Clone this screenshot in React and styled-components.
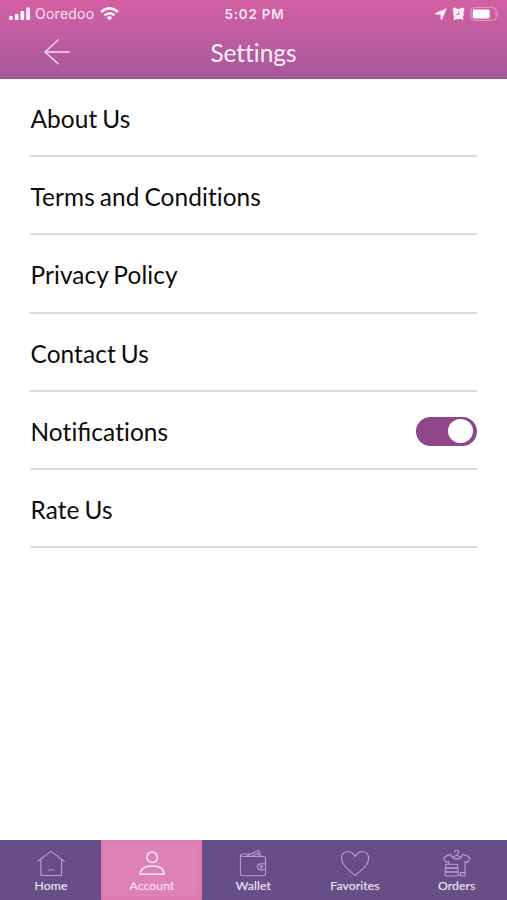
import React, { useState } from 'react'
import styled, { createGlobalStyle } from 'styled-components';

const GlobalStyle = createGlobalStyle`
    * {
        box-sizing: border-box;
    }
    body {
        margin: 0;
        background: white;
        font-family: Lato, sans-serif;
        font-variant-ligatures: none;
    }
    svg {
        display: block;
    }
`;

const Screen = styled.div`
    display: flex;
    flex-direction: column;
    height: 900px;
    width: 507px;
    overflow: hidden;
`;

/**
 * Top part: status bar and page title
 */

const Header = styled.header`
    height: 79px;
    color: white;
    background: linear-gradient(180deg, #d45fa4 0%, #c05da0 45%, #a6599c 100%);
    border-bottom: 1px solid #98568f;
`;

const StatusBar = styled.div`
    display: grid;
    grid-template-columns: 1fr auto 1fr;
    align-items: center;
    height: 27px;
    padding: 0 7px 0 9px;
    font-family: Inter, sans-serif;
    font-size: 14px;
    color: #fff0f8;
`;

const StatusGroup = styled.div`
    display: flex;
    align-items: center;
    justify-content: flex-start;
`;

const StatusIcons = styled(StatusGroup)`
    justify-content: flex-end;
    gap: 5px;
`;

const Carrier = styled.span`
    margin: 0 6px 0 4px;
    font-size: 14px;
    letter-spacing: 0.25px;
    color: #fbe0f0;
`;

const Clock = styled.span`
    font-size: 13.4px;
    font-weight: 600;
    letter-spacing: 0.8px;
    color: #fbe6f3;
`;

const TitleBar = styled.div`
    display: grid;
    grid-template-columns: 1fr auto 1fr;
    align-items: center;
    height: 50px;
    padding: 0 43px;
`;

const BackButton = styled.button`
    width: 28px;
    padding: 0;
    border: 0;
    background: none;
    color: #fbd9ef;
`;

const Title = styled.h1`
    margin: 0;
    padding-top: 2px;
    font-size: 24.4px;
    line-height: 30px;
    font-weight: 400;
    color: #fdeef8;
`;

/**
 * List of settings
 */

const List = styled.main`
    flex: 1;
    padding: 0 30px;
`;

const Row = styled.div`
    display: flex;
    align-items: center;
    justify-content: space-between;
    height: 78.2px;
    padding-top: 3px;
    border-bottom: 2px solid #d9d9d9;
    font-size: 24.4px;
    letter-spacing: 0.1px;
    word-spacing: -1.4px;
    color: #0c0c0c;
`;

const RowLabel = styled.span`
    padding-left: 0.5px;
`;

// joins only the letters inside, the rest of the page is set without ligatures
const Joined = styled.span`
    font-variant-ligatures: normal;
    letter-spacing: 0;
`;

const Switch = styled.button`
    display: flex;
    align-items: center;
    justify-content: ${props => props.$on ? 'flex-end' : 'flex-start'};
    width: 61px;
    height: 29px;
    padding: 0 4px;
    border: 0;
    border-radius: 15px;
    background: ${props => props.$on ? '#91458a' : '#c8c8c8'};
`;

const Knob = styled.span`
    width: 25px;
    height: 24px;
    border-radius: 50%;
    background: white;
`;

/**
 * Bottom navigation
 */

const TabBar = styled.nav`
    display: grid;
    grid-template-columns: 101px 101px repeat(3, 1fr);
    height: 60px;
    background: #664e87;
`;

const Tab = styled.div`
    display: flex;
    flex-direction: column;
    align-items: center;
    padding: 9px 0 0 1px;
    color: ${props => props.$active ? '#fce4f3' : '#b9a0d0'};
    background: ${props => props.$active ? '#dd82b7' : 'transparent'};
    box-shadow: ${props => props.$active ? 'inset 0 0 4px 1px #de70ab' : 'none'};
`;

const TabLabel = styled.span`
    margin-top: 1px;
    font-size: 12.2px;
    line-height: 15px;
    font-weight: 400;
    letter-spacing: 0.1px;
    -webkit-text-stroke: 0.15px;
    color: ${props => props.$active ? '#fbe0f0' : '#eee6f5'};
`;

const SignalIcon = () => (
    <svg width="22" height="14" viewBox="0 0 22 14" fill="currentColor">
        <rect x="0" y="9" width="3.8" height="4" rx="1" />
        <rect x="5.8" y="7" width="3.8" height="6" rx="1" />
        <rect x="11.4" y="4" width="3.8" height="9" rx="1" />
        <rect x="17.2" y="0.5" width="3.8" height="12.5" rx="1" />
    </svg>
)

const WifiIcon = () => (
    <svg width="20" height="14" viewBox="0 0 20 14" fill="none" stroke="currentColor" strokeWidth="2.5">
        <path d="M1.1 5Q9.5-2.3 17.9 5" />
        <path d="M4.5 8.4Q9.5 4 14.5 8.4" />
        <path d="M6.7 10.6Q9.5 8 12.3 10.6L9.5 13.6Z" fill="currentColor" stroke="none" />
    </svg>
)

const LocationIcon = () => (
    <svg width="12" height="12" viewBox="0 0 12 12" fill="currentColor" stroke="currentColor" strokeWidth="0.9" strokeLinejoin="round">
        <path d="M11.2 .8L6.8 11.2H6V6.1H.7V5.4Z" />
    </svg>
)

const AlarmIcon = () => (
    <svg width="13" height="13" viewBox="0 0 13 13" fill="currentColor">
        <circle cx="6.5" cy="7" r="5.3" />
        <circle cx="2.8" cy="2.8" r="2.2" />
        <circle cx="10.2" cy="2.8" r="2.2" />
        <path d="M2.4 12L3.5 10.6M10.6 12L9.5 10.6" stroke="currentColor" strokeWidth="1.9" strokeLinecap="round" />
        <path d="M6.8 4.3V7.4H4.3" fill="none" stroke="#cc60a3" strokeWidth="1" />
    </svg>
)

const BatteryIcon = () => (
    <svg width="30" height="14" viewBox="0 0 30 14" fill="none">
        <rect x="1" y=".6" width="25.2" height="12.8" rx="3.4" stroke="#e59ccb" />
        <rect x="2.8" y="2.5" width="16.9" height="9" rx="1.4" fill="white" />
        <path d="M27.4 5Q29.4 7 27.4 9Z" fill="#e59ccb" />
    </svg>
)

const BackIcon = () => (
    <svg width="28" height="28" viewBox="0 0 28 28" fill="none" stroke="currentColor" strokeWidth="1.4" strokeLinecap="round" strokeLinejoin="round">
        <path d="M15.2 1.8L2 14L15.2 25.8M2 14H26.2" />
    </svg>
)

const TabIcon = ({ children }) => (
    <svg width="30" height="28" viewBox="0 0 30 28" fill="none" stroke="currentColor" strokeWidth="1.1" strokeLinejoin="round" strokeLinecap="round">
        {children}
    </svg>
)

const HomeIcon = () => (
    <TabIcon>
        <path d="M1.8 12.3L15 2.4L28.2 12.3M4.8 10.4V26.5H25.6V10.4M12.2 21H18" />
    </TabIcon>
)

const AccountIcon = () => (
    <TabIcon>
        <circle cx="15.2" cy="8.3" r="5.2" strokeWidth="1.5" />
        <path d="M3.2 25.3C3.5 20 7.6 17 15.2 17S26.9 20 27.2 25.3Z" strokeWidth="1.5" />
    </TabIcon>
)

const WalletIcon = () => (
    <TabIcon>
        <path d="M5.2 7.5H25.6Q27.6 7.5 27.6 9.5V15M27.6 21V25Q27.6 26.8 25.6 26.8H4.4Q2.4 26.8 2.4 24.6V7Q2.4 5 4.6 5H12M2.4 6.3Q2.9 7.5 5.2 7.5" />
        <path d="M8.4 7.2L20.4 1.6L23.2 7.2M13.8 7.2L19.8 4.4L21.4 7.2" />
        <path d="M27.6 14.9H22.8Q19.6 14.9 19.6 18Q19.6 20.9 22.8 20.9H27.6Z" />
        <circle cx="23.4" cy="17.9" r="1" />
    </TabIcon>
)

const HeartIcon = () => (
    <TabIcon>
        <path d="M15.1 26.4C7.7 20.4 1.6 15.5 1.6 9.4C1.6 1.4 11.8.4 15.1 7.8C18.4.4 28.6 1.4 28.6 9.4C28.6 15.5 22.5 20.4 15.1 26.4Z" />
    </TabIcon>
)

const OrdersIcon = () => (
    <TabIcon>
        <path d="M12.6 3.2C12.6.6 17 .8 16.8 3.2C16.6 4.6 14.8 4.6 14.8 6.2L10.6 8M14.8 6.2L19 8" />
        <path d="M6.6 15.2V12.6L4.2 13.6L1.6 9.2Q4.6 6 9.2 5.4C10 11.4 19.6 11.4 20.4 5.4Q25 6 28 9.2L25.4 13.6L23 12.6V26.8H17.8" />
        <path d="M18.4 26.6V23.6H22.8" />
        <rect x="3.6" y="15.2" width="12" height="3.9" rx="1.4" />
        <rect x="3" y="19.1" width="13.3" height="3.9" rx="1.4" />
        <rect x="3" y="23" width="13.3" height="4" rx="1.4" />
    </TabIcon>
)

const items = [
    { id: 'about', label: 'About Us' },
    { id: 'terms', label: 'Terms and Conditions' },
    { id: 'privacy', label: 'Privacy Policy' },
    { id: 'contact', label: 'Contact Us' },
    { id: 'notifications', label: <>Noti<Joined>fi</Joined>cations</>, toggle: true },
    { id: 'rate', label: 'Rate Us' },
]

const tabs = [
    { label: 'Home', Icon: HomeIcon },
    { label: 'Account', Icon: AccountIcon },
    { label: 'Wallet', Icon: WalletIcon },
    { label: 'Favorites', Icon: HeartIcon },
    { label: 'Orders', Icon: OrdersIcon },
]

const App = () => {
    const [notifications, setNotifications] = useState(true)

    return (
        <Screen>
            <GlobalStyle />
            <Header>
                <StatusBar>
                    <StatusGroup>
                        <SignalIcon />
                        <Carrier>Ooredoo</Carrier>
                        <WifiIcon />
                    </StatusGroup>
                    <Clock>5:02 PM</Clock>
                    <StatusIcons>
                        <LocationIcon />
                        <AlarmIcon />
                        <BatteryIcon />
                    </StatusIcons>
                </StatusBar>
                <TitleBar>
                    <BackButton>
                        <BackIcon />
                    </BackButton>
                    <Title>Settings</Title>
                </TitleBar>
            </Header>
            <List>
                {items.map(({ id, label, toggle }) => (
                    <Row key={id}>
                        <RowLabel>{label}</RowLabel>
                        {toggle && (
                            <Switch $on={notifications} onClick={() => setNotifications(!notifications)}>
                                <Knob />
                            </Switch>
                        )}
                    </Row>
                ))}
            </List>
            <TabBar>
                {tabs.map(({ label, Icon }) => (
                    <Tab key={label} $active={label === 'Account'}>
                        <Icon />
                        <TabLabel $active={label === 'Account'}>{label}</TabLabel>
                    </Tab>
                ))}
            </TabBar>
        </Screen>
    )
}

export default App
